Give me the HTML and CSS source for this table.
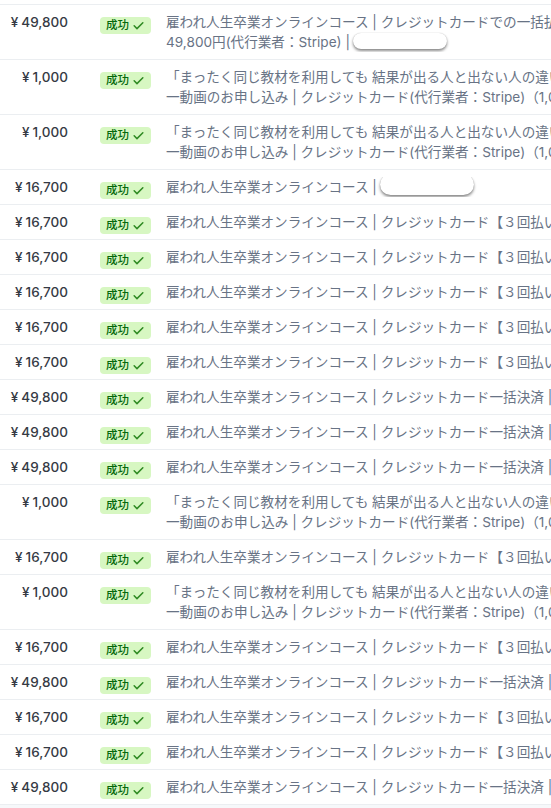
FILE: index.html
```html
<!DOCTYPE html>
<html lang="ja">
<head>
<meta charset="utf-8">
<link rel="stylesheet" href="styles.css">
</head>
<body>
<div class="table">
  <div class="lead"></div>

  <div class="row">
    <div class="amount"><span class="yen">¥</span>49,800</div>
    <div class="status"><span class="badge">成功<svg class="check" viewBox="0 0 12 12"><path d="M2 6.3l2.6 2.6L10 3.5"/></svg></span></div>
    <div class="desc"><div class="line">雇われ人生卒業オンラインコース | クレジットカードでの一括払い</div><div class="line">49,800円(代行業者：Stripe) |<span class="pill"></span></div></div>
  </div>

  <div class="row">
    <div class="amount"><span class="yen">¥</span>1,000</div>
    <div class="status"><span class="badge">成功<svg class="check" viewBox="0 0 12 12"><path d="M2 6.3l2.6 2.6L10 3.5"/></svg></span></div>
    <div class="desc"><div class="line">「まったく同じ教材を利用しても 結果が出る人と出ない人の違い</div><div class="line">一動画のお申し込み | クレジットカード(代行業者：Stripe)（1,000円）</div></div>
  </div>

  <div class="row">
    <div class="amount"><span class="yen">¥</span>1,000</div>
    <div class="status"><span class="badge">成功<svg class="check" viewBox="0 0 12 12"><path d="M2 6.3l2.6 2.6L10 3.5"/></svg></span></div>
    <div class="desc"><div class="line">「まったく同じ教材を利用しても 結果が出る人と出ない人の違い</div><div class="line">一動画のお申し込み | クレジットカード(代行業者：Stripe)（1,000円）</div></div>
  </div>

  <div class="row">
    <div class="amount"><span class="yen">¥</span>16,700</div>
    <div class="status"><span class="badge">成功<svg class="check" viewBox="0 0 12 12"><path d="M2 6.3l2.6 2.6L10 3.5"/></svg></span></div>
    <div class="desc"><div class="line">雇われ人生卒業オンラインコース |<span class="pill pill-tall"></span></div></div>
  </div>

  <div class="row">
    <div class="amount"><span class="yen">¥</span>16,700</div>
    <div class="status"><span class="badge">成功<svg class="check" viewBox="0 0 12 12"><path d="M2 6.3l2.6 2.6L10 3.5"/></svg></span></div>
    <div class="desc"><div class="line">雇われ人生卒業オンラインコース | クレジットカード【３回払い】</div></div>
  </div>
  <div class="row">
    <div class="amount"><span class="yen">¥</span>16,700</div>
    <div class="status"><span class="badge">成功<svg class="check" viewBox="0 0 12 12"><path d="M2 6.3l2.6 2.6L10 3.5"/></svg></span></div>
    <div class="desc"><div class="line">雇われ人生卒業オンラインコース | クレジットカード【３回払い】</div></div>
  </div>
  <div class="row">
    <div class="amount"><span class="yen">¥</span>16,700</div>
    <div class="status"><span class="badge">成功<svg class="check" viewBox="0 0 12 12"><path d="M2 6.3l2.6 2.6L10 3.5"/></svg></span></div>
    <div class="desc"><div class="line">雇われ人生卒業オンラインコース | クレジットカード【３回払い】</div></div>
  </div>
  <div class="row">
    <div class="amount"><span class="yen">¥</span>16,700</div>
    <div class="status"><span class="badge">成功<svg class="check" viewBox="0 0 12 12"><path d="M2 6.3l2.6 2.6L10 3.5"/></svg></span></div>
    <div class="desc"><div class="line">雇われ人生卒業オンラインコース | クレジットカード【３回払い】</div></div>
  </div>
  <div class="row">
    <div class="amount"><span class="yen">¥</span>16,700</div>
    <div class="status"><span class="badge">成功<svg class="check" viewBox="0 0 12 12"><path d="M2 6.3l2.6 2.6L10 3.5"/></svg></span></div>
    <div class="desc"><div class="line">雇われ人生卒業オンラインコース | クレジットカード【３回払い】</div></div>
  </div>

  <div class="row">
    <div class="amount"><span class="yen">¥</span>49,800</div>
    <div class="status"><span class="badge">成功<svg class="check" viewBox="0 0 12 12"><path d="M2 6.3l2.6 2.6L10 3.5"/></svg></span></div>
    <div class="desc"><div class="line">雇われ人生卒業オンラインコース | クレジットカード一括決済 | Stripe</div></div>
  </div>
  <div class="row">
    <div class="amount"><span class="yen">¥</span>49,800</div>
    <div class="status"><span class="badge">成功<svg class="check" viewBox="0 0 12 12"><path d="M2 6.3l2.6 2.6L10 3.5"/></svg></span></div>
    <div class="desc"><div class="line">雇われ人生卒業オンラインコース | クレジットカード一括決済 | Stripe</div></div>
  </div>
  <div class="row">
    <div class="amount"><span class="yen">¥</span>49,800</div>
    <div class="status"><span class="badge">成功<svg class="check" viewBox="0 0 12 12"><path d="M2 6.3l2.6 2.6L10 3.5"/></svg></span></div>
    <div class="desc"><div class="line">雇われ人生卒業オンラインコース | クレジットカード一括決済 | Stripe</div></div>
  </div>

  <div class="row">
    <div class="amount"><span class="yen">¥</span>1,000</div>
    <div class="status"><span class="badge">成功<svg class="check" viewBox="0 0 12 12"><path d="M2 6.3l2.6 2.6L10 3.5"/></svg></span></div>
    <div class="desc"><div class="line">「まったく同じ教材を利用しても 結果が出る人と出ない人の違い</div><div class="line">一動画のお申し込み | クレジットカード(代行業者：Stripe)（1,000円）</div></div>
  </div>

  <div class="row">
    <div class="amount"><span class="yen">¥</span>16,700</div>
    <div class="status"><span class="badge">成功<svg class="check" viewBox="0 0 12 12"><path d="M2 6.3l2.6 2.6L10 3.5"/></svg></span></div>
    <div class="desc"><div class="line">雇われ人生卒業オンラインコース | クレジットカード【３回払い】</div></div>
  </div>

  <div class="row">
    <div class="amount"><span class="yen">¥</span>1,000</div>
    <div class="status"><span class="badge">成功<svg class="check" viewBox="0 0 12 12"><path d="M2 6.3l2.6 2.6L10 3.5"/></svg></span></div>
    <div class="desc"><div class="line">「まったく同じ教材を利用しても 結果が出る人と出ない人の違い</div><div class="line">一動画のお申し込み | クレジットカード(代行業者：Stripe)（1,000円）</div></div>
  </div>

  <div class="row">
    <div class="amount"><span class="yen">¥</span>16,700</div>
    <div class="status"><span class="badge">成功<svg class="check" viewBox="0 0 12 12"><path d="M2 6.3l2.6 2.6L10 3.5"/></svg></span></div>
    <div class="desc"><div class="line">雇われ人生卒業オンラインコース | クレジットカード【３回払い】</div></div>
  </div>
  <div class="row">
    <div class="amount"><span class="yen">¥</span>49,800</div>
    <div class="status"><span class="badge">成功<svg class="check" viewBox="0 0 12 12"><path d="M2 6.3l2.6 2.6L10 3.5"/></svg></span></div>
    <div class="desc"><div class="line">雇われ人生卒業オンラインコース | クレジットカード一括決済 | Stripe</div></div>
  </div>
  <div class="row">
    <div class="amount"><span class="yen">¥</span>16,700</div>
    <div class="status"><span class="badge">成功<svg class="check" viewBox="0 0 12 12"><path d="M2 6.3l2.6 2.6L10 3.5"/></svg></span></div>
    <div class="desc"><div class="line">雇われ人生卒業オンラインコース | クレジットカード【３回払い】</div></div>
  </div>
  <div class="row">
    <div class="amount"><span class="yen">¥</span>16,700</div>
    <div class="status"><span class="badge">成功<svg class="check" viewBox="0 0 12 12"><path d="M2 6.3l2.6 2.6L10 3.5"/></svg></span></div>
    <div class="desc"><div class="line">雇われ人生卒業オンラインコース | クレジットカード【３回払い】</div></div>
  </div>
  <div class="row">
    <div class="amount"><span class="yen">¥</span>49,800</div>
    <div class="status"><span class="badge">成功<svg class="check" viewBox="0 0 12 12"><path d="M2 6.3l2.6 2.6L10 3.5"/></svg></span></div>
    <div class="desc"><div class="line">雇われ人生卒業オンラインコース | クレジットカード一括決済 | Stripe</div></div>
  </div>
</div>
</body>
</html>
```

FILE: styles.css
```css
html, body {
  margin: 0;
  padding: 0;
}
body {
  background: #f6f8fa;
  width: 551px;
  height: 808px;
  overflow: hidden;
  font-family: Inter, "Noto Sans CJK JP", sans-serif;
}
.table {
  background: #ffffff;
}
.lead {
  height: 4px;
  border-bottom: 1px solid #ebeef1;
}
.row {
  display: flex;
  align-items: flex-start;
  padding: 7px 0;
  border-bottom: 1px solid #ebeef1;
}
.amount {
  width: 68px;
  height: 20px;
  flex: none;
  text-align: right;
  font-size: 13.5px;
  font-weight: 500;
  line-height: 21px;
  color: #353a44;
}
.yen {
  display: inline-block;
  margin-right: 3px;
}
.status {
  flex: none;
  width: 66px;
  height: 20px;
  margin-left: 32px;
  padding-top: 1px;
  box-sizing: border-box;
}
.badge {
  display: inline-flex;
  align-items: center;
  gap: 3px;
  width: 51px;
  height: 17px;
  padding: 0 4px 0 6px;
  box-sizing: border-box;
  border-radius: 4px;
  background: #d7f7c2;
  color: #05690d;
  font-size: 11.5px;
  font-weight: 500;
  line-height: 17px;
}
.check {
  width: 13px;
  height: 13px;
  flex: none;
  fill: none;
  stroke: #2f8a22;
  stroke-width: 1.4;
  stroke-linecap: round;
  stroke-linejoin: round;
}
.desc {
  flex: 1;
  min-width: 0;
  overflow: hidden;
}
.line {
  height: 20px;
  white-space: nowrap;
  font-size: 13.6px;
  line-height: 21px;
  color: #687385;
}
.pill {
  display: inline-block;
  width: 94px;
  height: 16px;
  margin: 1px 0 0 3px;
  vertical-align: top;
  background: #ffffff;
  border-radius: 8px;
  box-shadow: 0 2px 3px rgba(0, 0, 0, 0.45), 0 0 1px rgba(0, 0, 0, 0.25);
}
.pill-tall {
  height: 21px;
  margin-top: -3px;
  border-radius: 11px;
}
```
